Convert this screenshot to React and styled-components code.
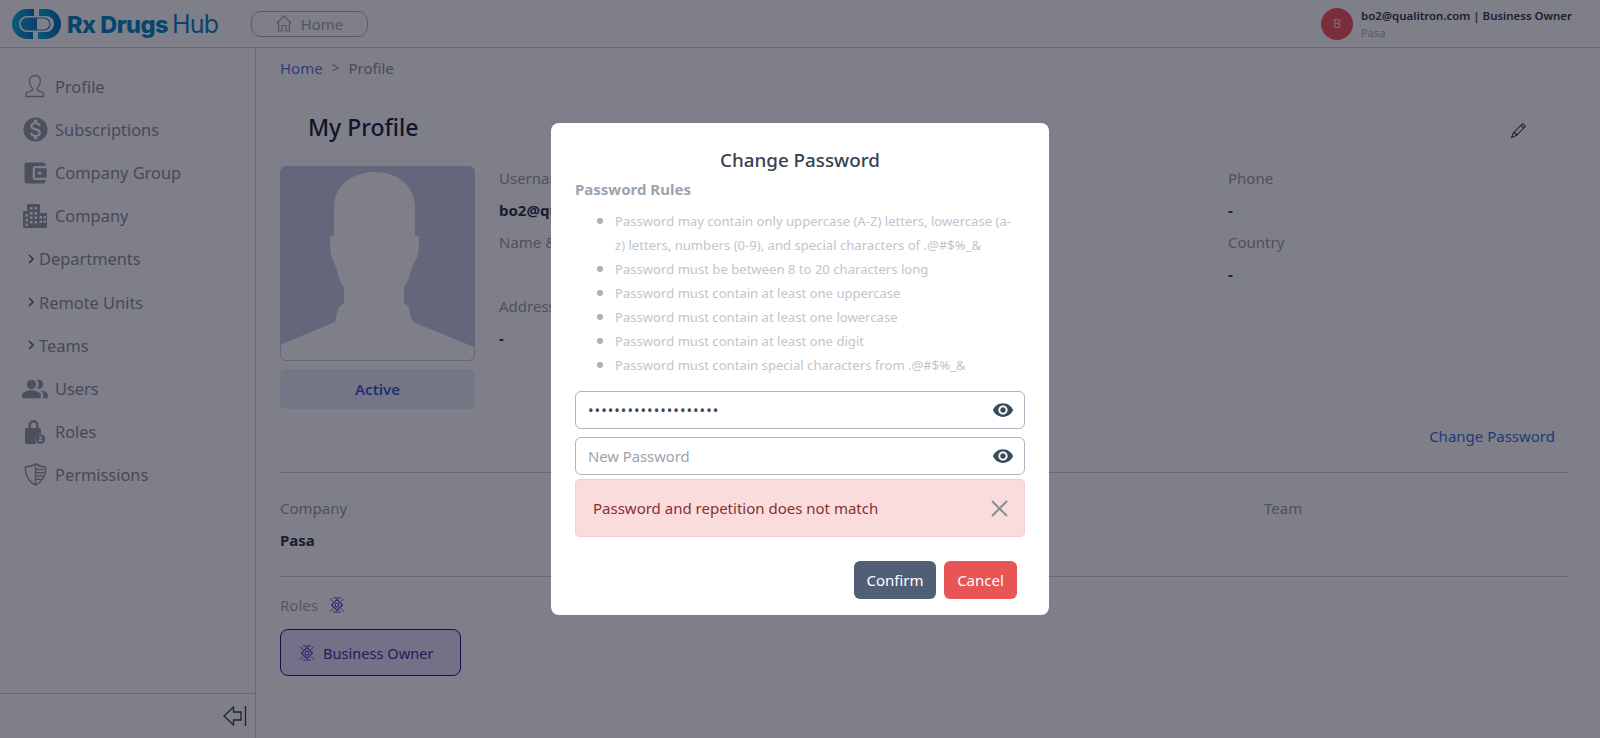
import React from 'react';
import styled, { createGlobalStyle } from 'styled-components';
import { MdMonetizationOn, MdAccountBalanceWallet, MdPeopleAlt, MdVisibility } from 'react-icons/md';
import { BsPencil } from 'react-icons/bs';

const FONT = '"Noto Sans", "Open Sans", sans-serif';

const GlobalStyle = createGlobalStyle`
  * { box-sizing: border-box; }
  html, body { margin: 0; padding: 0; background: #fff; }
  body { font-family: ${FONT}; font-size: 16px; color: #1f2937; }
`;

const Page = styled.div`
  height: 738px;
  display: flex;
  flex-direction: column;
  overflow: hidden;
`;

const Header = styled.header`
  height: 48px;
  flex: none;
  display: flex;
  align-items: center;
  padding: 0 28px 0 12px;
  border-bottom: 1px solid #cdd0d8;
`;

const Logo = styled.div`
  width: 239px;
  display: flex;
  align-items: center;
  gap: 6px;
`;

const LogoText = styled.span`
  font-family: Inter, sans-serif;
  font-size: 23.5px;
  font-weight: 800;
  letter-spacing: -0.5px;
  color: #0f8bc6;
  span { font-size: 25px; font-weight: 400; margin-left: 4px; letter-spacing: -0.8px; }
`;

const HomeButton = styled.button`
  width: 117px;
  height: 26px;
  display: flex;
  align-items: center;
  justify-content: center;
  gap: 9px;
  background: none;
  border: 1px solid #b5b8c4;
  border-radius: 10px;
  font: 400 15px ${FONT};
  color: #a4a7b2;
  padding: 0;
`;

const UserBox = styled.div`
  margin-left: auto;
  display: flex;
  align-items: center;
  gap: 8px;
`;

const Avatar = styled.div`
  width: 32px;
  height: 32px;
  border-radius: 50%;
  background: #f45c64;
  color: #f8d9dc;
  font-size: 12px;
  display: flex;
  align-items: center;
  justify-content: center;
`;

const UserMail = styled.div`
  font-size: 11.45px;
  font-weight: 600;
  line-height: 17px;
  color: #374151;
`;

const UserCompany = styled.div`
  font-size: 11px;
  line-height: 17px;
  color: #b0b3c2;
`;

const Body = styled.div`
  flex: 1;
  display: flex;
  min-height: 0;
`;

const Sidebar = styled.aside`
  width: 256px;
  flex: none;
  display: flex;
  flex-direction: column;
  border-right: 1px solid #cdd0d8;
`;

const Nav = styled.nav`
  flex: 1;
  padding-top: 16.6px;
`;

const NavItem = styled.div`
  height: 43.2px;
  display: flex;
  align-items: center;
  gap: ${p => (p.$sub ? '5px' : '8px')};
  padding-left: ${p => (p.$sub ? '28px' : '23px')};
  font-size: 16.4px;
  color: #8f929e;
`;

const NavIcon = styled.span`
  width: 24px;
  height: 24px;
  display: flex;
  align-items: center;
  justify-content: center;
  color: #9d9ea8;
  svg { flex: none; }
`;

const SidebarFooter = styled.div`
  height: 45px;
  flex: none;
  display: flex;
  align-items: center;
  justify-content: flex-end;
  padding-right: 8px;
  border-top: 1px solid #cdd0d8;
  color: #374151;
`;

const Main = styled.main`
  flex: 1;
  min-width: 0;
  padding: 8px 32px 0 24px;
`;

const Breadcrumb = styled.div`
  height: 24px;
  display: flex;
  align-items: center;
  gap: 9px;
  font-size: 15px;
  color: #9295a1;
  a { color: #5b7bea; }
  i { font-style: normal; font-size: 13.5px; }
`;

const TitleRow = styled.div`
  height: 40px;
  margin-top: 27px;
  display: flex;
  align-items: center;
  justify-content: space-between;
  padding: 0 42px 0 28px;
  svg { margin-top: 6px; }
`;

const Title = styled.h1`
  margin: 0;
  font-size: 23px;
  font-weight: 500;
  color: #1f2a44;
`;

const ProfileRow = styled.div`
  margin-top: 15px;
  display: flex;
  gap: 24px;
`;

const PhotoColumn = styled.div`
  width: 195px;
  flex: none;
  padding-top: 4px;
`;

const Photo = styled.div`
  height: 195px;
  border-radius: 6px;
  border: 1px solid #c8cce4;
  background: #c8cce4;
  overflow: hidden;
  svg { display: block; }
`;

const StatusBadge = styled.div`
  height: 40px;
  margin-top: 8px;
  border-radius: 6px;
  background: #e8ebf7;
  color: #3f5fd9;
  font-size: 15px;
  font-weight: 600;
  display: flex;
  align-items: center;
  justify-content: center;
`;

const InfoGrid = styled.div`
  flex: 1;
  display: grid;
  grid-template-columns: 729px 1fr;
`;

const InfoColumn = styled.div`
  display: flex;
  flex-direction: column;
`;

const Label = styled.div`
  height: 32px;
  line-height: 32px;
  font-size: 15px;
  color: #9d9fab;
`;

const Value = styled.div`
  height: 32px;
  line-height: 32px;
  font-size: 15px;
  font-weight: 700;
  color: #2f3a52;
`;

const LinkRow = styled.div`
  margin-top: 15px;
  height: 24px;
  line-height: 24px;
  padding-right: 13px;
  text-align: right;
  font-size: 15px;
  color: #3f78d8;
`;

const Divider = styled.hr`
  margin: ${p => p.$top}px 0 0;
  border: 0;
  border-top: 1px solid #cdd0d8;
`;

const CompanyRow = styled.div`
  padding-top: 19px;
  display: grid;
  grid-template-columns: 984px 1fr;
`;

const RolesRow = styled.div`
  margin-top: 12px;
  height: 32px;
  display: flex;
  align-items: center;
  gap: 11px;
  font-size: 15px;
  color: #a9abb8;
`;

const RoleChip = styled.div`
  width: 181px;
  height: 47px;
  margin-top: 8px;
  display: flex;
  align-items: center;
  gap: 8px;
  padding-left: 18px;
  border: 1px solid #2e1a8c;
  border-radius: 8px;
  background: #e9e1fa;
  font-size: 14.6px;
  color: #4a3a9c;
`;

const Overlay = styled.div`
  position: fixed;
  inset: 0;
  background: rgba(0, 0, 20, 0.5);
  display: flex;
  align-items: center;
  justify-content: center;
`;

const Modal = styled.div`
  width: 498px;
  height: 492px;
  background: #fff;
  border-radius: 8px;
  padding: 21px 24px 0;
`;

const ModalTitle = styled.h2`
  margin: 0;
  font-size: 18.8px;
  font-weight: 500;
  line-height: 32px;
  text-align: center;
  color: #374151;
`;

const RulesTitle = styled.div`
  margin-top: 3px;
  font-size: 15px;
  font-weight: 700;
  line-height: 20px;
  color: #9ca3af;
`;

const RulesList = styled.ul`
  margin: 10px 0 0;
  padding: 0 6px 0 40px;
  list-style: none;
  font-size: 13.1px;
  line-height: 24px;
  color: #c2c5cc;
`;

const Rule = styled.li`
  position: relative;
  &::before {
    content: '';
    position: absolute;
    left: -18px;
    top: 9px;
    width: 6px;
    height: 6px;
    border-radius: 50%;
    background: #a9aeb8;
  }
`;

const InputWrap = styled.div`
  height: 38px;
  margin-top: ${p => p.$top}px;
  display: flex;
  align-items: center;
  border: 1px solid #b0b5c3;
  border-radius: 6px;
  padding: 0 10px 0 12px;
  color: #3a4a5e;
  svg { flex: none; }
`;

const Input = styled.input`
  flex: 1;
  min-width: 0;
  border: 0;
  outline: 0;
  padding: 0;
  background: none;
  font: 400 14.8px ${FONT};
  color: #3a4a5e;
  &[type='password']:not(:placeholder-shown) { letter-spacing: 1px; }
  &::placeholder { color: #9ca3af; opacity: 1; }
`;

const Alert = styled.div`
  height: 58px;
  margin-top: 4px;
  display: flex;
  align-items: center;
  justify-content: space-between;
  padding: 0 16px 0 17px;
  background: #fbdcdc;
  border: 1px solid #f7cccf;
  border-radius: 4px;
  font-size: 15px;
  color: #843034;
`;

const Actions = styled.div`
  margin-top: 24px;
  display: flex;
  justify-content: flex-end;
  gap: 8px;
  padding-right: 8px;
`;

const Button = styled.button`
  height: 38px;
  width: ${p => p.$width}px;
  padding: 0;
  border: 0;
  border-radius: 6px;
  background: ${p => p.$bg};
  color: #fff;
  font: 400 15px ${FONT};
`;

const LogoMark = () => (
  <svg width="49" height="30" viewBox="0 0 49 30">
    <defs>
      <linearGradient id="logoGrad" x1="0" x2="1" y1="0" y2="0">
        <stop offset="0" stopColor="#18b0dc" />
        <stop offset="1" stopColor="#0b7cc0" />
      </linearGradient>
    </defs>
    <path d="M22 3.500H15a11.500 11.500 0 0 0 0 23h6" fill="none" stroke="url(#logoGrad)" strokeWidth="7" />
    <path d="M27 3.500h7a11.500 11.500 0 0 1 0 23h-8" fill="none" stroke="url(#logoGrad)" strokeWidth="7" />
    <path d="M15 8.500h10v13H15a6.500 6.500 0 0 1 0-13z" fill="url(#logoGrad)" />
    <path d="M25 9h7a6 6 0 0 1 0 12h-7" fill="none" stroke="#1a8fca" strokeWidth="1.200" />
  </svg>
);

const HomeIcon = () => (
  <svg width="16" height="17" viewBox="0 0 16 17" fill="none" stroke="currentColor" strokeWidth="1.200">
    <path d="M1 8l7-7 7 7M2.500 7v9h3.500v-5.500h4V16h3.500V7" />
  </svg>
);

const UserOutline = () => (
  <svg width="20" height="24" viewBox="0 0 20 24" fill="none" stroke="currentColor" strokeWidth="1.300">
    <path d="M10 1.500c3.400 0 5.400 2.400 5.400 5.600 0 3.200-1.600 5.600-3 7v2.200l6 2.600v3.600H1.200v-3.600l6.200-2.600v-2.200c-1.400-1.400-3-3.800-3-7C4.400 3.900 6.600 1.500 10 1.500z" />
  </svg>
);

const BuildingIcon = () => (
  <svg width="24" height="24" viewBox="0 0 24 24">
    <path fillRule="evenodd" fill="currentColor" d="M5 0h11a1 1 0 0 1 1 1v8h6a1 1 0 0 1 1 1v13a1 1 0 0 1-1 1H1a1 1 0 0 1-1-1V8a1 1 0 0 1 1-1h3V1a1 1 0 0 1 1-1zM7 3v2.500h2.500V3zM11.500 3v2.500H14V3zM7 8v2.500h2.500V8zM11.500 8v2.500H14V8zM2.500 10v2.500H5V10zM7 12.500V15h2.500v-2.500zM11.500 12.500V15H14v-2.500zM16.500 12v2.500H19V12zM20.500 12v2.500H23V12zM2.500 15v2.500H5V15zM16.500 16.500V19H19v-2.500zM20.500 16.500V19H23v-2.500zM2.500 19.500V22H5v-2.500zM7 17v2.500h2.500V17zM11.500 17v2.500H14V17z" />
  </svg>
);

const LockUserIcon = () => (
  <svg width="22" height="24" viewBox="0 0 22 24">
    <path fill="currentColor" d="M9.500 0C6.500 0 4.500 2.300 4.500 5.500V8H3a2 2 0 0 0-2 2v12a2 2 0 0 0 2 2h9.500a7 7 0 0 1 4.500-10.700V10a2 2 0 0 0-2-2h-.5V5.500C14.500 2.300 12.500 0 9.500 0zM7 8V5.500C7 3.700 8 2.400 9.500 2.400S12 3.700 12 5.500V8z" />
    <circle cx="16.500" cy="19" r="4.800" fill="currentColor" />
    <circle cx="16.500" cy="17.600" r="1.300" fill="#fff" />
    <path d="M13.800 21.300c.5-1.300 1.500-1.800 2.700-1.800s2.200.5 2.700 1.800z" fill="#fff" />
  </svg>
);

const ShieldIcon = () => (
  <svg width="23" height="23" viewBox="0 0 23 23" fill="none" stroke="currentColor">
    <path strokeWidth="1.500" d="M11.500 1C8 3 4.500 4 1.200 4.200c0 7.500 2.500 14 10.300 17.800C19.300 18.200 21.800 11.700 21.800 4.200 18.500 4 15 3 11.500 1z" />
    <path strokeWidth="1.400" d="M11.500 2.500V21M11.500 6.500h8.500M11.500 9.800h8.300M11.500 13h7.500M11.500 16.200h5.500" />
  </svg>
);

const Chevron = () => (
  <svg width="6" height="10" viewBox="0 0 6 10" fill="none" stroke="#6b6e7a" strokeWidth="1.600">
    <path d="M1 1l4 4-4 4" />
  </svg>
);

const CollapseIcon = () => (
  <svg width="24" height="20" viewBox="0 0 24 20" fill="none" stroke="currentColor" strokeWidth="1.300">
    <path d="M1 10L10.500 1v5h7.500v8h-7.500v5zM22.500 0v20" />
  </svg>
);

const RoleIcon = ({ size = 16 }) => (
  <svg width={size} height={size} viewBox="0 0 16 16" fill="none" stroke="#5b3ec8" strokeWidth="1.100">
    <path d="M8 2.500L13.500 8 8 13.500 2.500 8z" />
    <path d="M1 1.500l3 3M15 1.500l-3 3M1 14.500l3-3M15 14.500l-3-3M4 1h8M4 15h8" strokeWidth="0.900" />
    <rect x="6.200" y="6.200" width="3.600" height="3.800" rx="1.600" />
  </svg>
);

const CloseIcon = () => (
  <svg width="17" height="17" viewBox="0 0 17 17" fill="none" stroke="#8b8b8f" strokeWidth="2">
    <path d="M1 1l15 15M16 1L1 16" />
  </svg>
);

const Silhouette = () => (
  <svg width="193" height="193" viewBox="1 1 193 193">
    <path
      fill="#fff"
      d="M95 6C118 6 135 20 135 42V69L139 71C139 80 139 86 137 92C133 98 131 103 130 108C128 114 127 118 124 121V137L129 141C130 148 131 152 133 156L194 181V195H0V179L55 156C56 150 57 146 59 141L64 137V121C60 116 59 112 58 108C57 103 55 99 52 92C50 86 50 78 50 71L54 69V42C54 20 72 6 95 6Z"
    />
  </svg>
);

const navItems = [
  { label: 'Profile', icon: <UserOutline /> },
  { label: 'Subscriptions', icon: <MdMonetizationOn size={29} /> },
  { label: 'Company Group', icon: <MdAccountBalanceWallet size={28} /> },
  { label: 'Company', icon: <BuildingIcon /> },
  { label: 'Departments', sub: true },
  { label: 'Remote Units', sub: true },
  { label: 'Teams', sub: true },
  { label: 'Users', icon: <MdPeopleAlt size={28} /> },
  { label: 'Roles', icon: <LockUserIcon /> },
  { label: 'Permissions', icon: <ShieldIcon /> },
];

const rules = [
  'Password may contain only uppercase (A-Z) letters, lowercase (a-z) letters, numbers (0-9), and special characters of .@#$%_&',
  'Password must be between 8 to 20 characters long',
  'Password must contain at least one uppercase',
  'Password must contain at least one lowercase',
  'Password must contain at least one digit',
  'Password must contain special characters from .@#$%_&',
];

const App = () => (
  <Page>
    <GlobalStyle />
    <Header>
      <Logo>
        <LogoMark />
        <LogoText>Rx Drugs<span>Hub</span></LogoText>
      </Logo>
      <HomeButton><HomeIcon />Home</HomeButton>
      <UserBox>
        <Avatar>B</Avatar>
        <div>
          <UserMail>bo2@qualitron.com | Business Owner</UserMail>
          <UserCompany>Pasa</UserCompany>
        </div>
      </UserBox>
    </Header>
    <Body>
      <Sidebar>
        <Nav>
          {navItems.map(item => (
            <NavItem key={item.label} $sub={item.sub}>
              {item.sub ? <Chevron /> : <NavIcon>{item.icon}</NavIcon>}
              {item.label}
            </NavItem>
          ))}
        </Nav>
        <SidebarFooter><CollapseIcon /></SidebarFooter>
      </Sidebar>
      <Main>
        <Breadcrumb><a>Home</a><i>&gt;</i>Profile</Breadcrumb>
        <TitleRow>
          <Title>My Profile</Title>
          <BsPencil size={15} />
        </TitleRow>
        <ProfileRow>
          <PhotoColumn>
            <Photo><Silhouette /></Photo>
            <StatusBadge>Active</StatusBadge>
          </PhotoColumn>
          <InfoGrid>
            <InfoColumn>
              <Label>Username</Label>
              <Value>bo2@qualitron.com</Value>
              <Label>Name &amp; Surname</Label>
              <Value />
              <Label>Address</Label>
              <Value>-</Value>
            </InfoColumn>
            <InfoColumn>
              <Label>Phone</Label>
              <Value>-</Value>
              <Label>Country</Label>
              <Value>-</Value>
            </InfoColumn>
          </InfoGrid>
        </ProfileRow>
        <LinkRow>Change Password</LinkRow>
        <Divider $top={24} />
        <CompanyRow>
          <div>
            <Label>Company</Label>
            <Value>Pasa</Value>
          </div>
          <Label>Team</Label>
        </CompanyRow>
        <Divider $top={20} />
        <RolesRow>Roles <RoleIcon /></RolesRow>
        <RoleChip><RoleIcon />Business Owner</RoleChip>
      </Main>
    </Body>
    <Overlay>
      <Modal>
        <ModalTitle>Change Password</ModalTitle>
        <RulesTitle>Password Rules</RulesTitle>
        <RulesList>
          {rules.map(rule => <Rule key={rule}>{rule}</Rule>)}
        </RulesList>
        <InputWrap $top={14}>
          <Input type="password" defaultValue="abcdefghijklmnopqrst" />
          <MdVisibility size={22} />
        </InputWrap>
        <InputWrap $top={8}>
          <Input type="password" placeholder="New Password" />
          <MdVisibility size={22} />
        </InputWrap>
        <Alert>
          Password and repetition does not match
          <CloseIcon />
        </Alert>
        <Actions>
          <Button $width={82} $bg="#505f75">Confirm</Button>
          <Button $width={73} $bg="#e85555">Cancel</Button>
        </Actions>
      </Modal>
    </Overlay>
  </Page>
);

export default App;
